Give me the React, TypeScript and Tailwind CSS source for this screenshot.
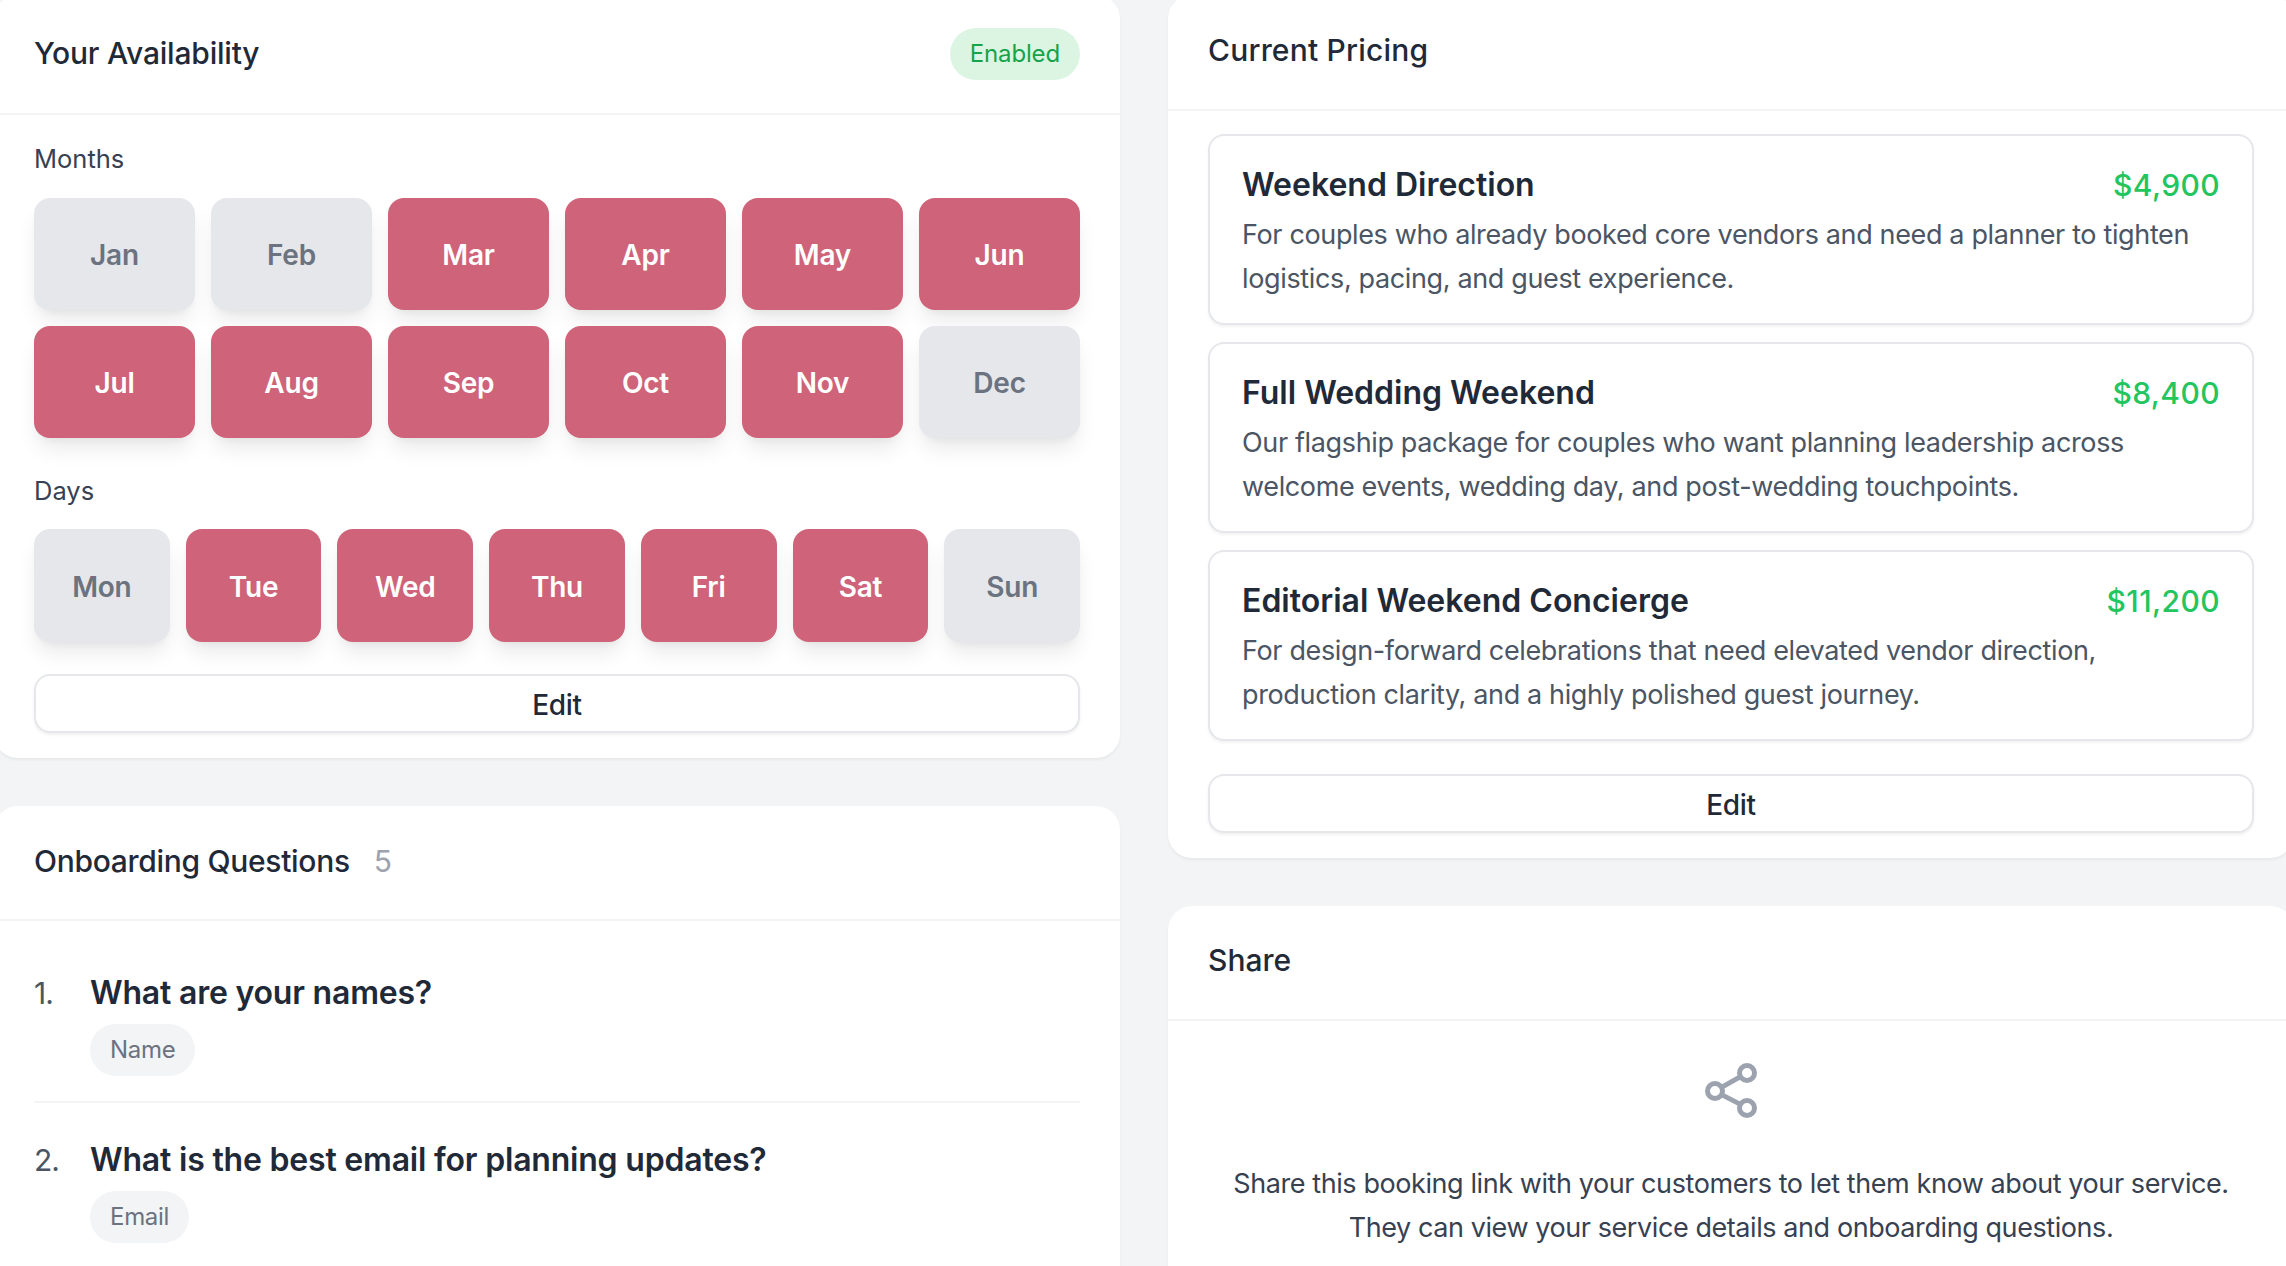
const F = "[font-family:Inter,'Liberation_Sans',sans-serif]";
const months: [string, boolean][] = [["Jan",false],["Feb",false],["Mar",true],["Apr",true],["May",true],["Jun",true],["Jul",true],["Aug",true],["Sep",true],["Oct",true],["Nov",true],["Dec",false]];
const days: [string, boolean][] = [["Mon",false],["Tue",true],["Wed",true],["Thu",true],["Fri",true],["Sat",true],["Sun",false]];
const pricing = [
  { t: "Weekend Direction", p: "$4,900", d: ["For couples who already booked core vendors and need a planner to tighten", "logistics, pacing, and guest experience."] },
  { t: "Full Wedding Weekend", p: "$8,400", d: ["Our flagship package for couples who want planning leadership across", "welcome events, wedding day, and post-wedding touchpoints."] },
  { t: "Editorial Weekend Concierge", p: "$11,200", d: ["For design-forward celebrations that need elevated vendor direction,", "production clarity, and a highly polished guest journey."] },
];

function Toggle({ label, on, h }: { label: string; on: boolean; h: string }) {
  return (
    <button className={`${h} flex items-center justify-center rounded-[16px] pt-[2px] text-[28px] font-semibold tracking-[-0.2px] shadow-[0_14px_22px_-4px_rgba(0,0,0,0.09),0_5px_8px_-4px_rgba(0,0,0,0.06)] ${on ? "bg-[#ce6379] text-white" : "bg-[#e5e7eb] text-[#6b7280]"}`}>
      {label}
    </button>
  );
}

function EditButton() {
  return (
    <button className="flex h-[59px] w-full items-center justify-center rounded-[16px] border-2 border-[#e5e7eb] bg-white pt-[2px] text-[28px] font-medium tracking-[-0.3px] text-[#1f2937] shadow-[0_2px_3px_rgba(0,0,0,0.06)]">
      Edit
    </button>
  );
}

function Card({ children }: { children: React.ReactNode }) {
  return <section className="rounded-[24px] bg-white shadow-[0_2px_3px_rgba(0,0,0,0.05)]">{children}</section>;
}

function Question({ n, q, tag }: { n: number; q: string; tag: string }) {
  return (
    <div className="flex">
      <span className="w-[56px] text-[30px] leading-[36px] tracking-[-1px] text-[#4b5563]">{n}.</span>
      <div>
        <h3 className="text-[32px] font-semibold leading-[36px] tracking-[-0.2px] text-[#1f2937]">{q}</h3>
        <span className="mt-[13px] inline-flex h-[52px] items-center rounded-full bg-[#f3f4f6] px-[20px] text-[24px] tracking-[-0.3px] text-[#6b7280]">{tag}</span>
      </div>
    </div>
  );
}

export default function App() {
  return (
    <div className={`h-[1266px] w-full overflow-hidden bg-[#f3f4f6] ${F}`}>
      <div className="-ml-[6px] -mt-[5px] grid w-[2300px] grid-cols-2 gap-x-[48px]">
        <div className="flex flex-col gap-[48px]">
          <Card>
            <header className="flex h-[120px] items-center justify-between border-b-2 border-[#f3f4f6] px-[40px] pb-[1px]">
              <h2 className="text-[30px] font-medium tracking-[-0.2px] text-[#1f2937]">Your Availability</h2>
              <span className="inline-flex h-[52px] items-center rounded-full bg-[#dcf5e3] px-[20px] text-[24px] tracking-[-0.15px] text-[#16a34a]">Enabled</span>
            </header>
            <div className="px-[40px] pb-[25px]">
              <p className="mt-[27px] mb-[22px] text-[25.5px] leading-[34px] text-[#374151]">Months</p>
              <div className="grid grid-cols-6 gap-[16px]">
                {months.map(([m, on]) => <Toggle key={m} label={m} on={on} h="h-[112px]" />)}
              </div>
              <p className="mt-[36px] mb-[21px] text-[25.5px] leading-[34px] text-[#374151]">Days</p>
              <div className="grid grid-cols-7 gap-[16px]">
                {days.map(([d, on]) => <Toggle key={d} label={d} on={on} h="h-[113px]" />)}
              </div>
              <div className="mt-[32px]"><EditButton /></div>
            </div>
          </Card>
          <Card>
            <header className="flex h-[115px] items-center gap-[24px] border-b-2 border-[#f3f4f6] px-[40px] pb-[2px]">
              <h2 className="text-[30px] font-medium tracking-[-0.3px] text-[#1f2937]">Onboarding Questions</h2>
              <span className="text-[30px] text-[#9ca3af]">5</span>
            </header>
            <div className="px-[40px] pb-[80px] pt-[54px]">
              <Question n={1} q="What are your names?" tag="Name" />
              <div className="mt-[25px] mb-[39px] h-[2px] bg-[#f3f4f6]" />
              <Question n={2} q="What is the best email for planning updates?" tag="Email" />
            </div>
          </Card>
        </div>
        <div className="flex flex-col gap-[48px]">
          <Card>
            <header className="flex h-[116px] items-center border-b-2 border-[#f3f4f6] px-[40px] pb-[4px]">
              <h2 className="text-[30px] font-medium tracking-[0.2px] text-[#1f2937]">Current Pricing</h2>
            </header>
            <div className="px-[40px] pb-[25px] pt-[23px]">
              <div className="flex flex-col gap-[17px]">
                {pricing.map((p) => (
                  <div key={p.t} className="h-[191px] rounded-[16px] border-2 border-[#e5e7eb] bg-white px-[32px] pt-[29px] shadow-[0_2px_3px_rgba(0,0,0,0.05)]">
                    <div className="flex items-center justify-between">
                      <h3 className="text-[32px] font-semibold leading-[40px] text-[#1f2937]">{p.t}</h3>
                      <span className="text-[30px] font-medium leading-[40px] tracking-[0.4px] text-[#22c55e]">{p.p}</span>
                    </div>
                    <p className="mt-[8px] text-[27px] leading-[44px] tracking-[-0.36px] text-[#4b5563]">{p.d[0]}<br />{p.d[1]}</p>
                  </div>
                ))}
              </div>
              <div className="mt-[33px]"><EditButton /></div>
            </div>
          </Card>
          <Card>
            <header className="flex h-[115px] items-center border-b-2 border-[#f3f4f6] px-[40px] pb-[4px]">
              <h2 className="text-[30px] font-medium tracking-[0px] text-[#1f2937]">Share</h2>
            </header>
            <div className="flex flex-col items-center px-[40px] pb-[80px] pt-[40px]">
              <svg width="52" height="60" viewBox="0 0 52 60" fill="none" stroke="#9ca3af" strokeWidth="5">
                <circle cx="10" cy="30" r="7.5" />
                <circle cx="42" cy="12" r="7.5" />
                <circle cx="42" cy="47" r="7.5" />
                <path d="M16.5 26.4 35.5 15.6M16.5 33.6 35.5 43.4" />
              </svg>
              <p className="mt-[41px] text-center text-[27px] leading-[44px] tracking-[-0.42px] text-[#374151]">
                Share this booking link with your customers to let them know about your service.<br />They can view your service details and onboarding questions.
              </p>
            </div>
          </Card>
        </div>
      </div>
    </div>
  );
}
